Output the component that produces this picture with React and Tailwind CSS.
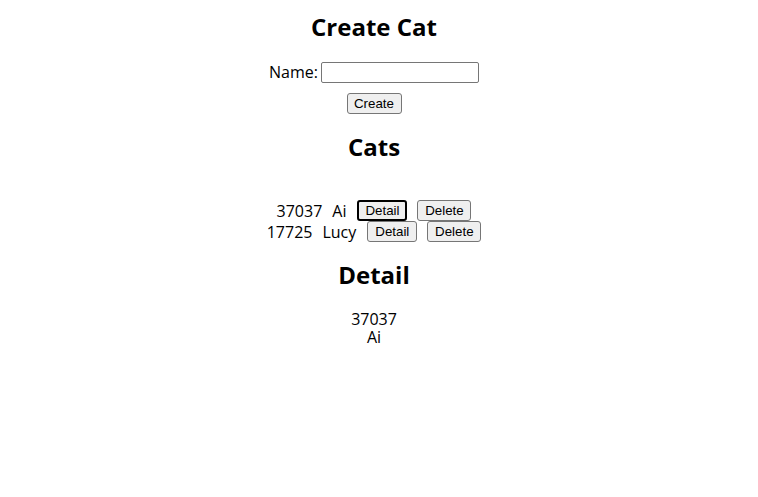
export default function App() {
  const cats = [
    { id: 37037, name: "Ai", focused: true },
    { id: 17725, name: "Lucy" },
  ];

  return (
    <div className="min-h-[497px] w-[748px] bg-white text-black font-['Open_Sans',sans-serif] text-base flex flex-col items-center">
      <h2 className="mt-[13px] h-[28px] leading-[28px] text-2xl font-bold">Create Cat</h2>

      <div className="mt-[21px] flex items-center h-[21px] gap-[3px]">
        <label className="leading-[21px]">Name:</label>
        <input className="w-[158px] h-[21px] border border-[#767676] rounded-[2px] bg-white" />
      </div>

      <Btn className="mt-[10px] w-[55px]">Create</Btn>

      <h2 className="mt-[19px] h-[28px] leading-[28px] text-2xl font-bold">Cats</h2>

      <div className="mt-[39px] flex flex-col items-center">
        {cats.map((c) => (
          <div key={c.id} className="flex items-center h-[21px] gap-[10px]">
            <span>{c.id}</span>
            <span>{c.name}</span>
            <Btn focused={c.focused} className="w-[50px] ml-[1px]">Detail</Btn>
            <Btn className="w-[54px]">Delete</Btn>
          </div>
        ))}
      </div>

      <h2 className="mt-[19px] h-[28px] leading-[28px] text-2xl font-bold">Detail</h2>

      <div className="mt-[21px] flex flex-col items-center leading-[18px]">
        <span>37037</span>
        <span>Ai</span>
      </div>
    </div>
  );
}

function Btn({ children, className = "", focused }) {
  return (
    <button
      className={`h-[21px] bg-[#efefef] rounded-[3px] font-['Liberation_Sans',Arial,sans-serif] text-[13.33px] leading-[16px] text-black ${
        focused ? "border-2 border-black" : "border border-[#767676]"
      } ${className}`}
    >
      {children}
    </button>
  );
}
